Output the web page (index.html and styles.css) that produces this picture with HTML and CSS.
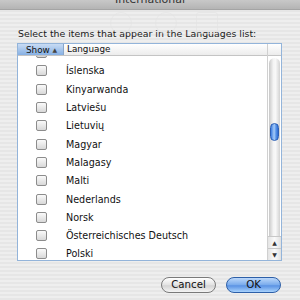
FILE: index.html
```html
<!DOCTYPE html>
<html lang="en">
<head>
  <meta charset="UTF-8">
  <title>International</title>
  <link rel="stylesheet" href="styles.css">
</head>
<body>
  <div class="titlebar"><span>International</span></div>
  <div class="sheet">
    <div class="ghost">
      <span class="ghost-icon g1"></span>
      <span class="ghost-icon g2"></span>
      <span class="ghost-icon g3"></span>
    </div>
    <p class="prompt">Select the items that appear in the Languages list:</p>
    <div class="table">
      <div class="grid">
        <div class="head">
          <div class="col-show">Show <span class="sort">&#9650;</span></div>
          <div class="col-lang">Language</div>
        </div>
        <div class="rows">
          <div class="row"><span class="check"></span></div>
          <div class="row"><span class="check"></span><span>Íslenska</span></div>
          <div class="row"><span class="check"></span><span>Kinyarwanda</span></div>
          <div class="row"><span class="check"></span><span>Latviešu</span></div>
          <div class="row"><span class="check"></span><span>Lietuvių</span></div>
          <div class="row"><span class="check"></span><span>Magyar</span></div>
          <div class="row"><span class="check"></span><span>Malagasy</span></div>
          <div class="row"><span class="check"></span><span>Malti</span></div>
          <div class="row"><span class="check"></span><span>Nederlands</span></div>
          <div class="row"><span class="check"></span><span>Norsk</span></div>
          <div class="row"><span class="check"></span><span>Österreichisches Deutsch</span></div>
          <div class="row"><span class="check"></span><span>Polski</span></div>
        </div>
      </div>
      <div class="scroll">
        <div class="corner"></div>
        <div class="track">
          <div class="thumb"></div>
        </div>
        <div class="arrow">&#9650;</div>
        <div class="arrow">&#9660;</div>
      </div>
    </div>
    <div class="buttons">
      <button class="btn">Cancel</button>
      <button class="btn ok">OK</button>
    </div>
  </div>
</body>
</html>
```

FILE: styles.css
```css
body {
  margin: 0;
  width: 300px;
  height: 300px;
  overflow: hidden;
  font-family: "DejaVu Sans", "Liberation Sans", sans-serif;
  color: #111;
  background: repeating-linear-gradient(#eeeeee 0, #eeeeee 2px, #e6e6e6 2px, #e6e6e6 4px);
}
.titlebar {
  height: 9px;
  overflow: hidden;
  border-bottom: 1px solid #a4a4a4;
  background: linear-gradient(#c8c8c8, #b4b4b4);
  text-align: center;
  font-size: 11px;
  line-height: 12px;
  color: #333;
}
.titlebar span {
  display: block;
  margin-top: -6px;
}
.sheet {
  position: relative;
  padding: 16px 18px 0 17px;
}
.ghost {
  position: absolute;
  top: 2px;
  left: 0;
  right: 0;
  height: 22px;
}
.ghost-icon {
  position: absolute;
  top: 0;
  width: 20px;
  height: 20px;
  border-radius: 50%;
  border: 1px solid #e2e2e2;
  opacity: 0.6;
}
.g1 { left: 110px; }
.g2 { left: 155px; }
.g3 { left: 196px; border-radius: 3px; }
.prompt {
  margin: 0 0 2px 1px;
  font-size: 9.4px;
  line-height: 15px;
  white-space: nowrap;
  color: #1a1a1a;
}
.table {
  display: flex;
  width: 263px;
  height: 216px;
  border: 1px solid #93b4da;
  background: #fff;
}
.grid {
  flex: 1;
  display: flex;
  flex-direction: column;
  overflow: hidden;
}
.head {
  display: flex;
  height: 11px;
  border-bottom: 1px solid #c4c4c4;
  font-size: 8.8px;
  line-height: 11px;
  white-space: nowrap;
  background: linear-gradient(#ffffff, #ececec);
}
.col-show {
  width: 37px;
  padding-left: 8px;
  border-right: 1px solid #8aa6c8;
  background: linear-gradient(#c9dcf4, #86b0e4);
}
.sort {
  font-size: 6px;
  vertical-align: 1px;
  color: #444;
}
.col-lang {
  padding-left: 3px;
}
.rows {
  flex: 1;
  overflow: hidden;
}
.row {
  display: flex;
  align-items: center;
  height: 18.3px;
  padding-left: 18px;
  gap: 19px;
  font-size: 9.6px;
  white-space: nowrap;
}
.row:first-child {
  margin-top: -12.5px;
}
.check {
  width: 9px;
  height: 9px;
  border: 1px solid #8c8c8c;
  border-radius: 2px;
  background: linear-gradient(#fafafa, #d8d8d8);
}
.scroll {
  width: 13px;
  display: flex;
  flex-direction: column;
  border-left: 1px solid #d0d0d0;
}
.corner {
  height: 11px;
  border-bottom: 1px solid #c4c4c4;
  background: linear-gradient(#ffffff, #ececec);
}
.track {
  flex: 1;
  position: relative;
  margin: 2px 1px 0;
  border-radius: 6px 6px 0 0;
  background: linear-gradient(90deg, #c8c8c8, #f4f4f4 40%, #f8f8f8 60%, #d2d2d2);
}
.thumb {
  position: absolute;
  top: 65px;
  left: 1px;
  width: 9px;
  height: 18px;
  border-radius: 5px;
  border: 1px solid #2b5fb5;
  box-sizing: border-box;
  background: linear-gradient(90deg, #3d7ce0, #a6ccf8 45%, #5a96ea 70%, #2e6ad0);
}
.arrow {
  height: 11px;
  font-size: 6px;
  line-height: 11px;
  text-align: center;
  color: #333;
  border-top: 1px solid #c8c8c8;
  background: linear-gradient(90deg, #e4e4e4, #fafafa 50%, #e0e0e0);
}
.buttons {
  display: flex;
  justify-content: flex-end;
  gap: 10px;
  margin-top: 16px;
  padding-right: 1px;
}
.btn {
  width: 55px;
  height: 16px;
  padding: 0;
  border: 1px solid #7a7a7a;
  border-radius: 8px;
  font-family: "DejaVu Sans", "Liberation Sans", sans-serif;
  font-size: 10.2px;
  line-height: 14px;
  color: #111;
  background: linear-gradient(#ffffff, #e2e2e2 50%, #d4d4d4 55%, #f4f4f4);
}
.btn.ok {
  border-color: #2d5fa8;
  background: linear-gradient(#bcd8fa, #78aaec 50%, #5a92e4 55%, #a8d2fc);
}
```
